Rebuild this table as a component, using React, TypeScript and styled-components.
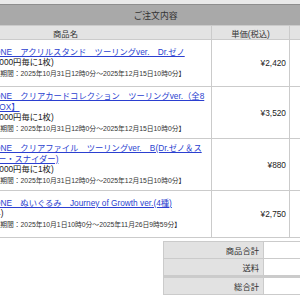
import { createGlobalStyle, styled } from 'styled-components'

type OrderItem = {
  name: string
  note: string
  period: string
  price: string
  qty: number
}

const items: OrderItem[] = [
  {
    name: 'Dr.STONE　アクリルスタンド　ツーリングver.　Dr.ゼノ',
    note: '(税込5,000円毎に1枚)',
    period: '※【販売期間：2025年10月31日12時0分〜2025年12月15日10時0分】',
    price: '¥2,420',
    qty: 1,
  },
  {
    name: 'Dr.STONE　クリアカードコレクション　ツーリングver.（全8種）【BOX】',
    note: '(税込5,000円毎に1枚)',
    period: '※【販売期間：2025年10月31日12時0分〜2025年12月15日10時0分】',
    price: '¥3,520',
    qty: 1,
  },
  {
    name: 'Dr.STONE　クリアファイル　ツーリングver.　B(Dr.ゼノ＆スタンリー・スナイダー)',
    note: '(税込5,000円毎に1枚)',
    period: '※【販売期間：2025年10月31日12時0分〜2025年12月15日10時0分】',
    price: '¥880',
    qty: 1,
  },
  {
    name: 'Dr.STONE　ぬいぐるみ　Journey of Growth ver.(4種)',
    note: '(対象外)',
    period: '※【販売期間：2025年10月1日10時0分〜2025年11月26日9時59分】',
    price: '¥2,750',
    qty: 1,
  },
]

const GlobalStyle = createGlobalStyle`
  html, body {
    margin: 0;
    padding: 0;
    background: #fff;
    overflow: hidden;
  }
  body {
    font-family: "Liberation Sans", "Noto Sans CJK JP", sans-serif;
    color: #333;
  }
`

const Viewport = styled.div`
  width: 300px;
  height: 300px;
  overflow: hidden;
`

const Page = styled.div`
  width: 472px;
  margin-left: -81px;
`

const TopStrip = styled.div`
  height: 4px;
  background: #e9e9e9;
  border-bottom: 1px solid #8e8e8e;
`

const OrderTable = styled.table`
  width: 100%;
  border-collapse: collapse;
  table-layout: fixed;
  font-size: 8.3px;
`

const Col = styled.col<{ $width: number }>`
  width: ${(p) => p.$width}px;
`

const Caption = styled.th`
  height: 20px;
  padding: 0;
  background: #a9a9a9;
  font-size: 8.8px;
  font-weight: normal;
  color: #333;
  text-align: center;
`

const HeadCell = styled.th`
  height: 13px;
  padding: 0;
  background: #e3e3e3;
  border: 1px solid #cbcbcb;
  font-weight: normal;
  text-align: center;
`

const Cell = styled.td`
  border: 1px solid #cbcbcb;
  vertical-align: middle;
`

const NameCell = styled(Cell)`
  height: 38px;
  padding: 4px;
`

const ItemBox = styled.div`
  display: flex;
  align-items: center;
  gap: 5px;
`

const Thumb = styled.div`
  flex: 0 0 44px;
  height: 36px;
  background: #f0f0f0;
`

const Info = styled.div`
  flex: 1;
  min-width: 0;
`

const ItemLink = styled.a`
  display: block;
  color: #2b3fd0;
  text-decoration: underline;
  line-height: 10.5px;
`

const Note = styled.div`
  line-height: 11.5px;
  color: #222;
`

const Period = styled.div`
  font-size: 6.8px;
  line-height: 10.5px;
  color: #333;
`

const PriceCell = styled(Cell)`
  padding: 0 3px;
  text-align: right;
  color: #222;
`

const QtyCell = styled(Cell)`
  text-align: center;
`

const TotalsTable = styled.table`
  width: 228px;
  margin: 3px 0 0 auto;
  border-collapse: collapse;
  font-size: 8.3px;
`

const TotalLabel = styled.th<{ $grand?: boolean }>`
  width: 91px;
  height: 16px;
  padding: 0 4px;
  background: #e2e2e2;
  border: 1px solid #cbcbcb;
  border-top-width: ${(p) => (p.$grand ? '3px' : '1px')};
  font-weight: normal;
  text-align: right;
`

const TotalValue = styled.td<{ $grand?: boolean }>`
  padding: 0 4px;
  border: 1px solid #cbcbcb;
  border-top-width: ${(p) => (p.$grand ? '3px' : '1px')};
  text-align: right;
`

const App = () => {
  return (
    <Viewport>
      <GlobalStyle />
      <Page>
        <TopStrip />
        <OrderTable>
          <colgroup>
            <Col $width={292} />
            <Col $width={78} />
            <Col $width={102} />
          </colgroup>
          <thead>
            <tr>
              <Caption colSpan={3}>ご注文内容</Caption>
            </tr>
            <tr>
              <HeadCell>商品名</HeadCell>
              <HeadCell>単価(税込)</HeadCell>
              <HeadCell>数量</HeadCell>
            </tr>
          </thead>
          <tbody>
            {items.map((item) => (
              <tr key={item.name}>
                <NameCell>
                  <ItemBox>
                    <Thumb />
                    <Info>
                      <ItemLink href="#">{item.name}</ItemLink>
                      <Note>{item.note}</Note>
                      <Period>{item.period}</Period>
                    </Info>
                  </ItemBox>
                </NameCell>
                <PriceCell>{item.price}</PriceCell>
                <QtyCell>{item.qty}</QtyCell>
              </tr>
            ))}
          </tbody>
        </OrderTable>
        <TotalsTable>
          <tbody>
            <tr>
              <TotalLabel>商品合計</TotalLabel>
              <TotalValue>¥9,570</TotalValue>
            </tr>
            <tr>
              <TotalLabel>送料</TotalLabel>
              <TotalValue>¥0</TotalValue>
            </tr>
            <tr>
              <TotalLabel $grand>総合計</TotalLabel>
              <TotalValue $grand>¥9,570</TotalValue>
            </tr>
          </tbody>
        </TotalsTable>
      </Page>
    </Viewport>
  )
}

export default App
